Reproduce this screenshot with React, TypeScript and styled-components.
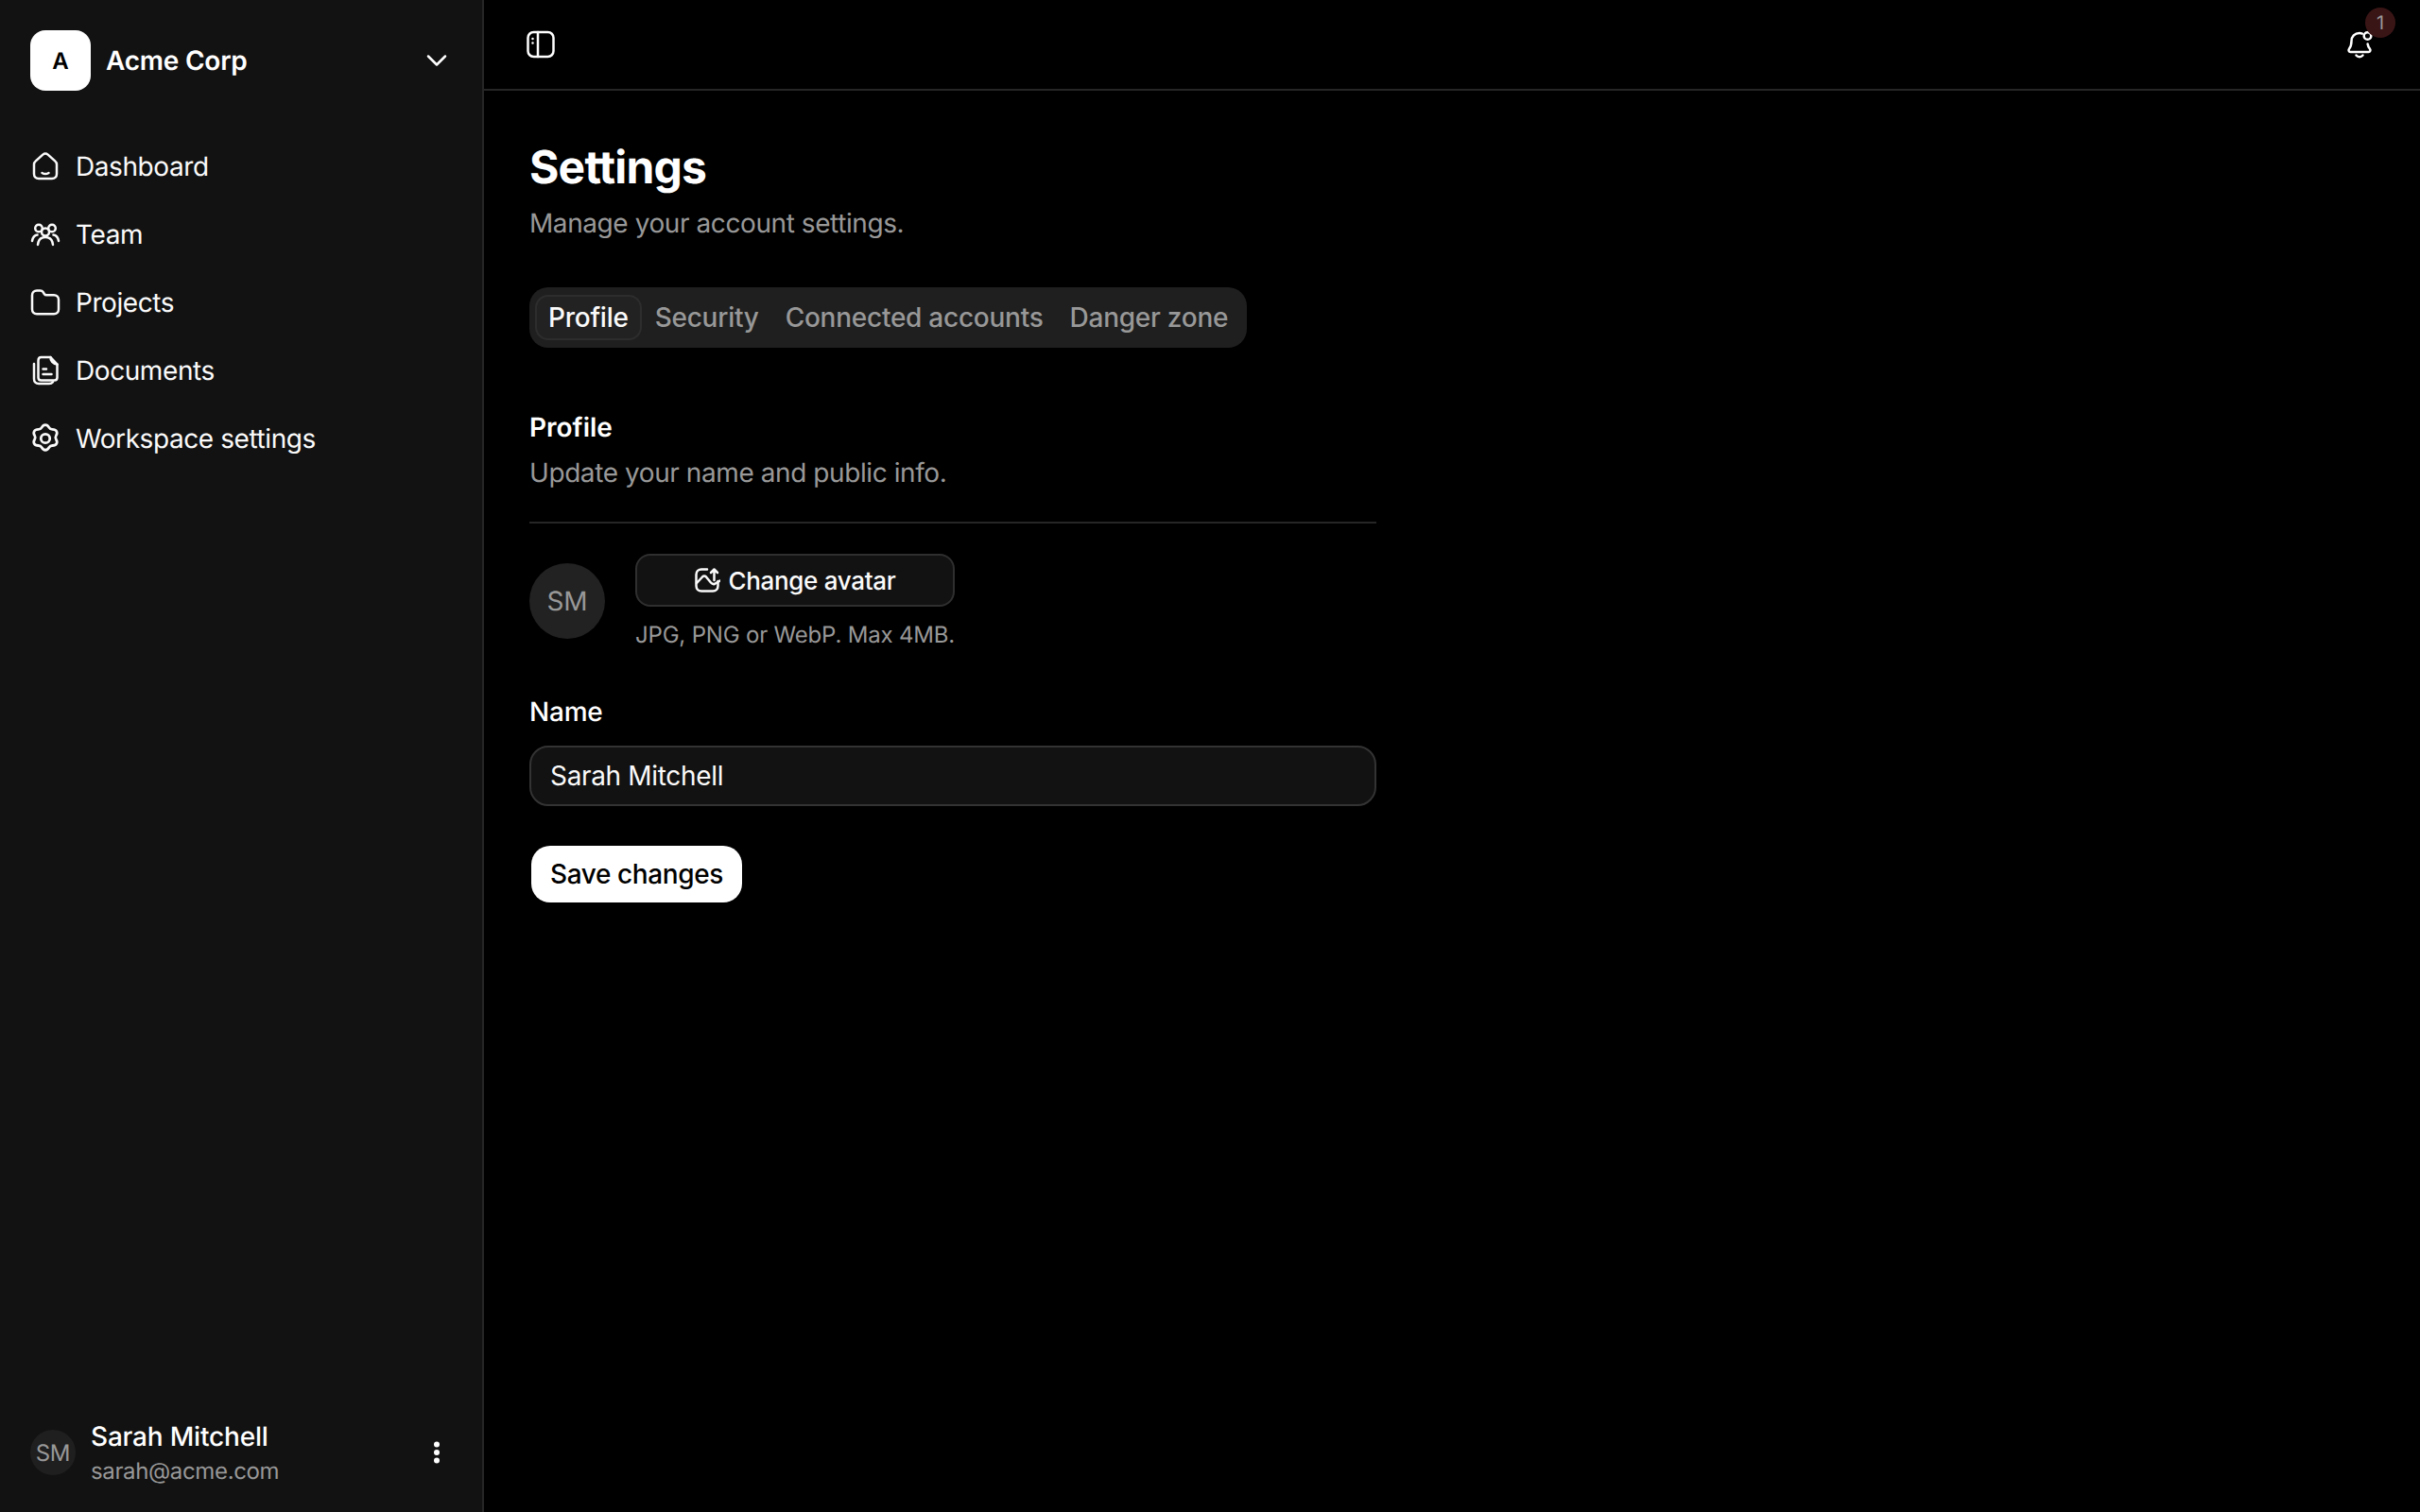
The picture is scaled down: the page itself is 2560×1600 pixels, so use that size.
import React from "react";
import styled, { createGlobalStyle } from "styled-components";

const GlobalStyle = createGlobalStyle`
  html, body {
    margin: 0;
    background: #000;
    color: #fff;
    font-family: Inter, "Noto Sans", sans-serif;
    letter-spacing: -0.012em;
    text-rendering: geometricPrecision;
  }
  * { box-sizing: border-box; }
`;

const Shell = styled.div`
  display: flex;
  height: 100vh;
  background: #000;
`;

const Sidebar = styled.aside`
  width: 512px;
  flex-shrink: 0;
  display: flex;
  flex-direction: column;
  background: #121212;
  border-right: 2px solid #262626;
  padding: 32px 32px 26px;
`;

const WorkspaceRow = styled.div`
  display: flex;
  align-items: center;
  height: 64px;
`;

const Logo = styled.div`
  width: 64px;
  height: 64px;
  border-radius: 16px;
  background: #fff;
  color: #000;
  display: flex;
  align-items: center;
  justify-content: center;
  font-size: 24px;
  font-weight: 600;
`;

const WorkspaceName = styled.span`
  flex: 1;
  margin-left: 16px;
  font-size: 28px;
  font-weight: 600;
  letter-spacing: -0.008em;
`;

const NavList = styled.nav`
  display: flex;
  flex-direction: column;
  margin-top: 44px;
  flex: 1;
`;

const NavItem = styled.a`
  display: flex;
  align-items: center;
  gap: 16px;
  height: 72px;
  font-size: 28px;
  letter-spacing: -0.015em;
  color: #fafafa;
`;

const FooterRow = styled.div`
  display: flex;
  align-items: center;
`;

const SmallAvatar = styled.div`
  width: 48px;
  height: 48px;
  border-radius: 50%;
  background: #1f1f1f;
  color: #989898;
  display: flex;
  align-items: center;
  justify-content: center;
  font-size: 24px;
`;

const FooterText = styled.div`
  flex: 1;
  margin-left: 16px;
`;

const FooterName = styled.div`
  font-size: 28px;
  font-weight: 500;
  line-height: 40px;
`;

const FooterEmail = styled.div`
  font-size: 24px;
  line-height: 34px;
  letter-spacing: -0.015em;
  color: #989898;
`;

const Main = styled.main`
  flex: 1;
  display: flex;
  flex-direction: column;
`;

const TopBar = styled.header`
  height: 96px;
  display: flex;
  align-items: center;
  justify-content: space-between;
  border-bottom: 2px solid #262626;
  padding: 0 48px 0 44px;
`;

const BellWrap = styled.div`
  position: relative;
  width: 32px;
  height: 32px;
`;

const Badge = styled.span`
  position: absolute;
  top: -23px;
  left: 22px;
  width: 32px;
  height: 32px;
  border-radius: 50%;
  background: #3a1516;
  color: #989898;
  display: flex;
  align-items: center;
  justify-content: center;
  font-size: 20px;
`;

const Content = styled.section`
  width: 944px;
  padding: 49px 0 0 48px;
`;

const Title = styled.h1`
  margin: 0 0 7px;
  font-size: 48px;
  line-height: 64px;
  font-weight: 700;
  letter-spacing: -0.017em;
`;

const Muted = styled.p`
  margin: 0;
  font-size: 28px;
  line-height: 40px;
  letter-spacing: -0.015em;
  color: #989898;
`;

const TabBar = styled.div`
  display: inline-flex;
  align-items: center;
  height: 64px;
  margin: 48px 0 64px;
  padding: 0 6px;
  border-radius: 20px;
  background: #1f1f1f;
`;

const Tab = styled.button<{ $active?: boolean }>`
  height: 48px;
  padding: 0 12px;
  border-radius: 14px;
  border: 2px solid ${(p) => (p.$active ? "#2d2d2d" : "transparent")};
  background: ${(p) => (p.$active ? "#222222" : "transparent")};
  color: ${(p) => (p.$active ? "#fafafa" : "#989898")};
  font: 500 28px Inter, sans-serif;
  letter-spacing: -0.009em;
`;

const SectionTitle = styled.h2`
  margin: 0 0 8px;
  font-size: 28px;
  line-height: 40px;
  font-weight: 600;
  letter-spacing: 0;
`;

const Divider = styled.hr`
  border: 0;
  height: 2px;
  margin: 32px 0;
  background: #262626;
`;

const AvatarRow = styled.div`
  display: flex;
  align-items: flex-start;
  gap: 32px;
`;

const LargeAvatar = styled.div`
  width: 80px;
  height: 80px;
  margin-top: 10px;
  border-radius: 50%;
  background: #222222;
  color: #989898;
  display: flex;
  align-items: center;
  justify-content: center;
  font-size: 28px;
`;

const AvatarControls = styled.div`
  display: flex;
  flex-direction: column;
  gap: 14px;
`;

const OutlineButton = styled.button`
  height: 56px;
  display: flex;
  align-items: center;
  justify-content: center;
  gap: 8px;
  border-radius: 16px;
  border: 2px solid #2f2f2f;
  background: #121212;
  color: #fafafa;
  font: 500 26px Inter, sans-serif;
  letter-spacing: -0.012em;
`;

const Hint = styled.span`
  font-size: 24px;
  line-height: 32px;
  color: #989898;
`;

const FieldLabel = styled.label`
  display: block;
  margin: 45px 0 16px;
  font-size: 28px;
  line-height: 40px;
  font-weight: 500;
`;

const TextInput = styled.input`
  width: 100%;
  height: 64px;
  padding: 0 20px;
  border-radius: 20px;
  border: 2px solid #333;
  background: #121212;
  color: #fafafa;
  font: 400 28px Inter, sans-serif;
  letter-spacing: -0.012em;
  outline: none;
`;

const PrimaryButton = styled.button`
  display: block;
  height: 60px;
  margin: 42px 0 0 2px;
  padding: 0 20px;
  border: 0;
  border-radius: 20px;
  background: #fff;
  color: #000;
  font: 500 28px Inter, sans-serif;
  letter-spacing: -0.014em;
`;

const Glyph = styled.svg<{ $size?: number }>`
  width: ${(p) => p.$size ?? 32}px;
  height: ${(p) => p.$size ?? 32}px;
  flex-shrink: 0;
  fill: none;
  stroke: currentColor;
  stroke-width: 2.5;
  stroke-linecap: round;
  stroke-linejoin: round;
`;

const HomeIcon = () => (
  <Glyph viewBox="0 0 32 32">
    <path d="M4 14c0-1.500.6-2.600 1.800-3.600l7.500-6.800c1.600-1.300 3.800-1.300 5.400 0l7.500 6.800c1.200 1 1.800 2.100 1.800 3.600v10c0 3-2 5-5 5H9c-3 0-5-2-5-5z" />
    <path d="M12.500 23c2 1.200 5 1.200 7 0" />
  </Glyph>
);

const TeamIcon = () => (
  <Glyph viewBox="0 0 32 32">
    <circle cx="16" cy="13.500" r="4" />
    <circle cx="9" cy="9.500" r="3.800" />
    <circle cx="23" cy="9.500" r="3.800" />
    <path d="M8 27c.5-5 3.500-8 8-8s7.500 3 8 8" />
    <path d="M2 23c.6-3.800 2.500-6 5.500-6.500M30 23c-.6-3.800-2.500-6-5.500-6.500" />
  </Glyph>
);

const FolderIcon = () => (
  <Glyph viewBox="0 0 32 32">
    <path d="M2 8.500c0-3 2-5 5-5h3.500c1.500 0 2.500.6 3.300 1.800l1 1.700c.6.9 1.300 1.300 2.400 1.300H25c3 0 5 2 5 5v10c0 3-2 5-5 5H7c-3 0-5-2-5-5z" />
  </Glyph>
);

const DocumentsIcon = () => (
  <Glyph viewBox="0 0 32 32">
    <path d="M8.500 5.500v18c0 1.800 1.200 3 3 3h14c1.800 0 3-1.200 3-3V9.500l-7-7.500h-10c-1.800 0-3 1.500-3 3.500z" />
    <path d="M21.500 2c-.3 3.500 2.500 7 7 7.500" />
    <path d="M4 9v16c0 3 2 5 5 5h11c1.800 0 3-.6 4-1.800" />
    <path d="M13.500 14.500h3.500M13.500 20h9" />
  </Glyph>
);

const GearIcon = () => (
  <Glyph viewBox="1.500 1.500 29 29">
    <circle cx="16" cy="16" r="4.300" />
    <path d="M12.500 5.500c1-1.800 2-2.500 3.500-2.500s2.500.7 3.500 2.500c.7 1.200 1.800 1.800 3.200 1.800 2.100 0 3.200.5 4 1.800.8 1.400.6 2.500-.5 4.300-.7 1.200-.7 2.100 0 3.300 1.100 1.800 1.300 3 .5 4.300-.8 1.300-1.900 1.800-4 1.800-1.400 0-2.500.6-3.200 1.800-1 1.800-2 2.500-3.500 2.500s-2.500-.7-3.500-2.500c-.7-1.200-1.800-1.800-3.200-1.800-2.100 0-3.200-.5-4-1.800-.8-1.300-.6-2.500.5-4.300.7-1.200.7-2.100 0-3.300-1.100-1.800-1.300-2.900-.5-4.300.8-1.300 1.900-1.800 4-1.800 1.400 0 2.500-.6 3.200-1.800z" />
  </Glyph>
);

const ChevronIcon = () => (
  <Glyph viewBox="0 0 32 32">
    <path d="M7 11.500l9 9 9-9" />
  </Glyph>
);

const DotsIcon = () => (
  <Glyph viewBox="0 0 32 32" style={{ fill: "currentColor", stroke: "none" }}>
    <circle cx="16" cy="7.500" r="3" />
    <circle cx="16" cy="16" r="3" />
    <circle cx="16" cy="24.500" r="3" />
  </Glyph>
);

const PanelIcon = () => (
  <Glyph viewBox="0 0 32 32">
    <rect x="2.500" y="3" width="27" height="26" rx="6" />
    <path d="M13 3v26" />
    <path d="M7.500 10h.01M7.500 14.500h.01" />
  </Glyph>
);

const BellIcon = () => (
  <Glyph viewBox="0 0 32 32">
    <path d="M19 4.600c-1-.4-2-.6-3-.6-5 0-8.500 3.800-8.500 8.500 0 4-.7 6-2.500 8.200-1 1.300-.4 3.300 1.500 3.300h19c1.900 0 2.500-2 1.500-3.300-1.300-1.600-2.100-3-2.400-5.200" />
    <path d="M12.500 27.500c1.800 2.200 5.200 2.200 7 0" />
    <circle cx="24.500" cy="7" r="3.800" />
  </Glyph>
);

const ImageUploadIcon = () => (
  <Glyph $size={28} viewBox="0 0 28 28">
    <path d="M14 2.500H8c-3 0-5.500 2-5.500 5.500v12c0 3.500 2.500 5.500 5.500 5.500h12c3.500 0 5.500-2.500 5.500-5.500v-5" />
    <path d="M3 17l6-6.500c1.200-1.200 2.800-1.200 4 0l5 6c1.500 1.700 3.500 2 5 .8l4.500-2.800" />
    <path d="M21.500 14V2.500M18 6l3.500-3.500L25 6" />
  </Glyph>
);

const NAV_ITEMS = [
  { label: "Dashboard", Icon: HomeIcon },
  { label: "Team", Icon: TeamIcon },
  { label: "Projects", Icon: FolderIcon },
  { label: "Documents", Icon: DocumentsIcon },
  { label: "Workspace settings", Icon: GearIcon },
];

const TABS = ["Profile", "Security", "Connected accounts", "Danger zone"];

export default function App() {
  return (
    <Shell>
      <GlobalStyle />
      <Sidebar>
        <WorkspaceRow>
          <Logo>A</Logo>
          <WorkspaceName>Acme Corp</WorkspaceName>
          <ChevronIcon />
        </WorkspaceRow>
        <NavList>
          {NAV_ITEMS.map(({ label, Icon }) => (
            <NavItem key={label}>
              <Icon />
              {label}
            </NavItem>
          ))}
        </NavList>
        <FooterRow>
          <SmallAvatar>SM</SmallAvatar>
          <FooterText>
            <FooterName>Sarah Mitchell</FooterName>
            <FooterEmail>sarah@acme.com</FooterEmail>
          </FooterText>
          <DotsIcon />
        </FooterRow>
      </Sidebar>
      <Main>
        <TopBar>
          <PanelIcon />
          <BellWrap>
            <BellIcon />
            <Badge>1</Badge>
          </BellWrap>
        </TopBar>
        <Content>
          <Title>Settings</Title>
          <Muted>Manage your account settings.</Muted>
          <TabBar>
            {TABS.map((tab, i) => (
              <Tab key={tab} $active={i === 0}>
                {tab}
              </Tab>
            ))}
          </TabBar>
          <SectionTitle>Profile</SectionTitle>
          <Muted>Update your name and public info.</Muted>
          <Divider />
          <AvatarRow>
            <LargeAvatar>SM</LargeAvatar>
            <AvatarControls>
              <OutlineButton>
                <ImageUploadIcon />
                Change avatar
              </OutlineButton>
              <Hint>JPG, PNG or WebP. Max 4MB.</Hint>
            </AvatarControls>
          </AvatarRow>
          <FieldLabel>Name</FieldLabel>
          <TextInput defaultValue="Sarah Mitchell" />
          <PrimaryButton>Save changes</PrimaryButton>
        </Content>
      </Main>
    </Shell>
  );
}
